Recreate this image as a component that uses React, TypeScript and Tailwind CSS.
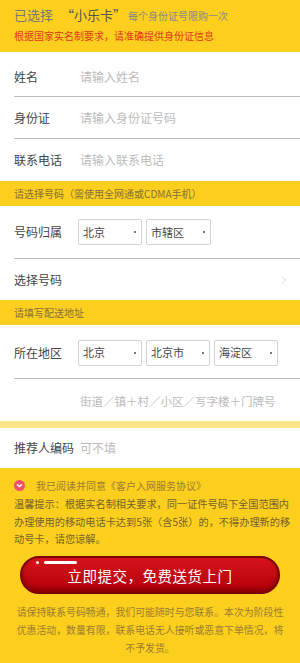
import { ChevronRight } from 'lucide-react'

const font = { fontFamily: '"Noto Sans CJK SC", "Noto Sans", sans-serif' }

function Select({ value, width = 'w-[64px]' }: { value: string; width?: string }) {
  return (
    <div className={`${width} h-[26px] bg-white border border-[#d4d4d4] rounded-[2px] flex items-center justify-between pl-[4px] pr-[5px]`}>
      <span className="text-[11px] text-[#444]">{value}</span>
      <span className="w-[2px] h-[2px] bg-[#777]" />
    </div>
  )
}

function Row({ label, placeholder, h, border = true, pad = '' }: { label: string; placeholder?: string; h: string; border?: boolean; pad?: string }) {
  return (
    <div className={`${h} ${pad} ml-[14px] flex items-center ${border ? 'border-b border-[#bdbdbd]' : ''}`}>
      <span className="w-[66px] text-[12px] text-[#444]">{label}</span>
      {placeholder && <span className="text-[12px] text-[#bbb]">{placeholder}</span>}
    </div>
  )
}

function Bar({ text }: { text: string }) {
  return (
    <div className="h-[25px] bg-[#fccf1e] flex items-center px-[14px]">
      <span className="text-[10px] text-[#86703a]">{text}</span>
    </div>
  )
}

export default function App() {
  return (
    <div className="w-[300px] h-[663px] bg-white overflow-hidden" style={font}>
      {/* header */}
      <div className="h-[52px] bg-[#fccf1e] px-[14px] pt-[6px]">
        <div className="flex items-center h-[18px] whitespace-nowrap">
          <span className="text-[13px] text-[#777]">已选择</span>
          <span className="text-[13px] text-[#555] ml-[8px]">“小乐卡”</span>
          <span className="text-[10px] text-[#888] ml-[2px]">每个身份证号限购一次</span>
        </div>
        <div className="h-[22px] flex items-center text-[10px] text-[#e2381c] whitespace-nowrap">
          根据国家实名制要求，请准确提供身份证信息
        </div>
      </div>

      <Row label="姓名" placeholder="请输入姓名" h="h-[45px]" pad="pt-[5px]" />
      <Row label="身份证" placeholder="请输入身份证号码" h="h-[42px]" />
      <Row label="联系电话" placeholder="请输入联系电话" h="h-[42px]" border={false} />

      <Bar text="请选择号码（需使用全网通或CDMA手机）" />

      <div className="h-[53px] ml-[14px] flex items-center border-b border-[#bdbdbd]">
        <span className="w-[64px] text-[12px] text-[#444]">号码归属</span>
        <div className="flex gap-[4px]">
          <Select value="北京" />
          <Select value="市辖区" width="w-[65px]" />
        </div>
      </div>
      <div className="h-[41px] ml-[14px] flex items-center justify-between pr-[10px]">
        <span className="text-[12px] text-[#444]">选择号码</span>
        <ChevronRight size={12} strokeWidth={1.5} className="text-[#ccc]" />
      </div>

      <Bar text="请填写配送地址" />

      <div className="h-[54px] ml-[14px] pt-[2px] flex items-center border-b border-[#bdbdbd]">
        <span className="w-[64px] text-[12px] text-[#444]">所在地区</span>
        <div className="flex gap-[4px]">
          <Select value="北京" />
          <Select value="北京市" />
          <Select value="海淀区" />
        </div>
      </div>
      <div className="h-[42px] flex items-center pl-[80px] pt-[4px]">
        <span className="text-[11.5px] text-[#bbb] whitespace-nowrap">街道／镇＋村／小区／写字楼＋门牌号</span>
      </div>

      <div className="h-[7px] bg-[#fde68a]" />

      <div className="h-[40px] ml-[14px] flex items-center">
        <span className="text-[12px] text-[#444]">推荐人编码</span>
        <span className="text-[12px] text-[#bbb] ml-[6px]">可不填</span>
      </div>

      {/* bottom */}
      <div className="h-[195px] bg-[#fccf1e] px-[14px] pt-[10px]">
        <div className="flex items-center h-[14px]">
          <span className="w-[11px] h-[11px] rounded-full bg-[#f0506a] flex items-center justify-center">
            <svg width="7" height="5" viewBox="0 0 7 5">
              <path d="M1 1.2 L3.5 3.6 L6 1.2" fill="none" stroke="white" strokeWidth="1.4" />
            </svg>
          </span>
          <span className="ml-[11px] text-[10px] text-[#9a7b32]">我已阅读并同意《客户入网服务协议》</span>
        </div>
        <div className="mt-[3px] text-[10.2px] leading-[17.5px] text-[#74622c] whitespace-nowrap">
          <div>温馨提示：根据实名制相关要求，同一证件号码下全国范围内</div>
          <div>办理使用的移动电话卡达到5张（含5张）的，不得办理新的移</div>
          <div>动号卡，请您谅解。</div>
        </div>

        <div className="mt-[8px] mx-[6px] h-[38px] rounded-full bg-gradient-to-b from-[#d6141a] to-[#b3000a] border-2 border-[#7c0205] shadow-[inset_0_-3px_4px_rgba(90,0,0,0.5)] flex items-center justify-center relative">
          <span className="absolute left-[14px] top-[3px] w-[3px] h-[3px] rounded-full bg-white" />
          <span className="absolute left-[22px] top-[3px] w-[33px] h-[3px] rounded-full bg-white" />
          <span className="text-[14.5px] text-white tracking-[0.5px] mt-[2px]">立即提交，免费送货上门</span>
        </div>

        <div className="mt-[9px] text-center text-[9.9px] leading-[18px] text-[#9b7d2e] whitespace-nowrap">
          <div>请保持联系号码畅通，我们可能随时与您联系。本次为阶段性</div>
          <div>优惠活动，数量有限，联系电话无人接听或恶意下单情况，将</div>
          <div>不予发货。</div>
        </div>
      </div>
    </div>
  )
}
